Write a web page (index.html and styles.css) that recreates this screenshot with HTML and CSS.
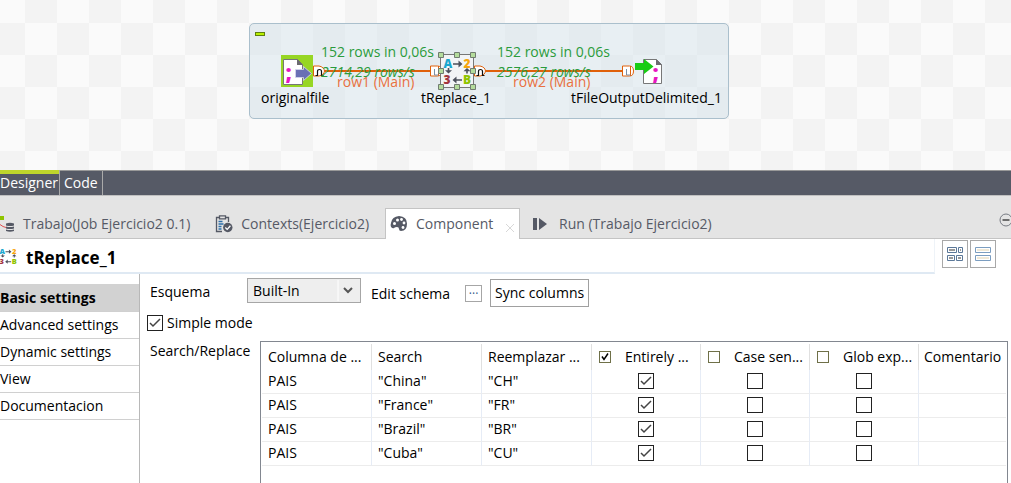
FILE: index.html
```html
<!DOCTYPE html>
<html lang="es">
<head>
<meta charset="utf-8">
<title>tReplace_1</title>
<link rel="stylesheet" href="styles.css">
</head>
<body>
<svg class="defs" aria-hidden="true">
  <symbol id="replace" viewBox="0 0 32 32">
    <g class="letters">
      <text x="2.500" y="13" fill="#1aa7cf">A</text>
      <text x="22.500" y="13" fill="#f7a60a">2</text>
      <text x="2.500" y="29" fill="#a3363f">3</text>
      <text x="22" y="29" fill="#8fc400">B</text>
    </g>
    <path d="M12 8.200h5.500V5.500L21.500 9l-4 3.500V9.800H12zM21 24.200h-5.500v-2.700l-4 3.500 4 3.500v-2.700H21zM6.700 13h1.600v2.200H11L7.500 18.500 4 15.200h2.700zM25.200 18.500h1.600v-2.200h2.700L26 13l-3.500 3.300h2.700z" fill="#4c505c"/>
  </symbol>
  <symbol id="out" viewBox="0 0 12 12">
    <path d="M.5 1H6q5 1 5.500 5-.5 4-5.500 5H.500z" fill="#fff" stroke="#e0600a"/>
    <path d="M2.500 10.500h2V6.500q0-2 2-2t2 2v4h2" fill="none" stroke="#111" stroke-width="1.200"/>
  </symbol>
  <symbol id="in" viewBox="0 0 12 12">
    <path d="M.5 1h7q4 0 4 5t-4 5h-7zM8.500 1v10" fill="#fff" stroke="#e0600a"/>
    <path d="M4.500 4v6h4" fill="none" stroke="#7a8fa5"/>
  </symbol>
</svg>

<main class="app">
  <section class="canvas" aria-label="Job">
    <div class="job">
      <span class="collapse"></span>
      <span class="link link-a"></span>
      <span class="link link-b"></span>
      <svg class="node node-source" viewBox="0 0 32 32">
        <path fill="#97d624" d="M0 0h32v32H0z"/>
        <path d="M2.500 4.500h14l5 5v20h-19z" fill="#fff" stroke="#777"/>
        <path d="M16 4v6h6z" fill="#6b6b70"/>
        <path d="M14.500 14.500h8v-3L30.500 18.500l-8 7v-3h-8z" fill="#6970b5" stroke="#d5d8ee" stroke-width=".8"/>
        <text class="semi" x="4.500" y="25">;</text>
      </svg>
      <svg class="port port-a"><use href="#out"/></svg>
      <svg class="port port-b"><use href="#in"/></svg>
      <svg class="port port-c"><use href="#out"/></svg>
      <svg class="port port-d"><use href="#in"/></svg>
      <svg class="node node-replace" viewBox="0 0 38 38">
        <path d="M2.500 2.500h33v33h-33z" fill="#f2f4f6" stroke="#777"/>
        <use href="#replace" x="3" y="3" width="32" height="32"/>
        <path d="M.5.5h5v5h-5zM16.500.5h5v5h-5zM32.500.5h5v5h-5zM.5 16.500h5v5h-5zM32.500 16.500h5v5h-5zM.5 32.500h5v5h-5zM16.500 32.500h5v5h-5zM32.500 32.500h5v5h-5z" fill="#b4dc9c" stroke="#707c70"/>
      </svg>
      <svg class="node node-output" viewBox="0 0 30 28">
        <path d="M9.500 1.500h13l5 5v19h-18z" fill="#fff" stroke="#777"/>
        <path d="M22 1v6h6z" fill="#6b6b70"/>
        <path d="M1 5h9V1l9.500 7.500L10 16v-4H1z" fill="#18cc14"/>
        <text class="semi" x="18.500" y="22">;</text>
      </svg>
      <span class="stat stat-a">152 rows in 0,06s</span>
      <i class="rate rate-a">2714,29 rows/s</i>
      <span class="row-name row-a">row1 (Main)</span>
      <span class="stat stat-b">152 rows in 0,06s</span>
      <i class="rate rate-b">2576,27 rows/s</i>
      <span class="row-name row-b">row2 (Main)</span>
      <span class="caption caption-a">originalfile</span>
      <span class="caption caption-b">tReplace_1</span>
      <span class="caption caption-c">tFileOutputDelimited_1</span>
    </div>
  </section>

  <nav class="editor-tabs">
    <button class="editor-tab is-current">Designer</button>
    <button class="editor-tab">Code</button>
  </nav>

  <nav class="view-tabs">
    <button class="view-tab tab-job">
      <svg class="tab-icon" viewBox="0 0 18 18"><path d="M0 1h7v4H0z" fill="#8fc400"/><path d="M3 9.500l3 2 3 1" fill="none" stroke="#e05050"/><path d="M9 8.500q4-1.500 8 0v2q-4 1-8 0zM9 11.500q4 1 8 0v2q-4 1-8 0zM9 14.500q4 1 8 0v1.500q-4 1.500-8 0z" fill="#555965"/></svg>
      Trabajo(Job Ejercicio2 0.1)</button>
    <button class="view-tab tab-contexts">
      <svg class="tab-icon" viewBox="0 0 18 18"><path d="M7 16.500H1.500v-14h12V7" fill="none" stroke="#555965" stroke-width="1.300"/><path d="M4.500.8h6v3h-6z" fill="#e4e4e4" stroke="#555965" stroke-width="1.300"/><path d="M3.500 6.500h4M3.500 9h5M3.500 11.500h3M3.500 14h3" stroke="#2c6ea8" stroke-width="1.300"/><circle cx="12.800" cy="12.500" r="4.700" fill="#555965"/><path d="m10.300 12.500 1.900 1.900 3.200-3.600" fill="none" stroke="#fff" stroke-width="1.300"/></svg>
      Contexts(Ejercicio2)</button>
    <button class="view-tab tab-component is-current">
      <svg class="tab-icon" viewBox="0 0 18 18"><path d="M1 8Q2 1.500 9 1q8 .5 8 7.500 0 7.500-6 7.500-2 0-2-2t-2-2q-2 0-3 1T1 12q-.8-2 0-4z" fill="#555965"/><g fill="#fff"><circle cx="4.500" cy="8.500" r="1.500"/><circle cx="7.500" cy="5" r="1.500"/><circle cx="11.500" cy="4.500" r="1.400"/><circle cx="14" cy="8" r="1.400"/><circle cx="13" cy="12.500" r="1.400"/></g></svg>
      Component
      <svg class="tab-close" viewBox="0 0 8 8"><path d="m0 0 8 8M8 0 0 8" stroke="#d8d8d8"/></svg></button>
    <button class="view-tab tab-run">
      <svg class="tab-icon" viewBox="0 0 18 18"><path d="M0 3h4v12H0zM6 3l8 6-8 6z" fill="#555965"/></svg>
      Run (Trabajo Ejercicio2)</button>
    <button class="minimize" aria-label="Minimize"><svg viewBox="0 0 14 14"><circle cx="7" cy="7" r="6" fill="none" stroke="#777b83"/><path d="M3.500 7h7" stroke="#444" stroke-width="1.500"/></svg></button>
  </nav>

  <header class="head">
    <h1 class="title"><svg class="title-icon"><use href="#replace"/></svg>tReplace_1</h1>
    <div class="layouts">
      <button class="layout" aria-label="Table layout"><svg viewBox="0 0 16 14"><path d="M.5.5h9v5h-9zM11.500.5h4v5h-4zM.5 8.500h7v5h-7zM9.500 8.500h6v5h-6z" fill="#fff" stroke="#5b7899"/><path d="M2 2h6v2H2zM13 2h1v2h-1zM2 10h4v2H2zM11 10h3v2h-3z" fill="#999"/></svg></button>
      <button class="layout" aria-label="List layout"><svg viewBox="0 0 16 14"><path d="M.5.5h15v5H.5zM.5 8.500h15v5H.5z" fill="#fff" stroke="#7b9dc0"/><path d="M2 2h12v2H2zM2 10h12v2H2z" fill="#efe8d6"/></svg></button>
    </div>
  </header>

  <div class="body">
    <nav class="side">
      <a class="side-item is-current" href="#basic">Basic settings</a>
      <a class="side-item" href="#advanced">Advanced settings</a>
      <a class="side-item" href="#dynamic">Dynamic settings</a>
      <a class="side-item" href="#view">View</a>
      <a class="side-item" href="#doc">Documentacion</a>
    </nav>
    <section class="form">
      <div class="schema">
        <label class="name" for="schema">Esquema</label>
        <select class="select" id="schema"><option>Built-In</option></select>
        <label class="edit" for="edit">Edit schema</label>
        <button class="dots" id="edit">···</button>
        <button class="sync">Sync columns</button>
      </div>
      <label class="simple"><input class="check" type="checkbox" checked>Simple mode</label>
      <div class="replace">
        <span class="name">Search/Replace</span>
        <div class="grid-box">
          <table class="grid">
            <colgroup><col class="wide"><col class="wide"><col class="wide"><col class="flag"><col class="flag"><col class="flag"><col></colgroup>
            <thead><tr>
              <th>Columna de ...</th><th>Search</th><th>Reemplazar ...</th>
              <th><label class="all"><input class="mini" type="checkbox" checked>Entirely ...</label></th>
              <th><label class="all"><input class="mini" type="checkbox">Case sen...</label></th>
              <th><label class="all"><input class="mini" type="checkbox">Glob exp...</label></th>
              <th class="last">Comentario</th>
            </tr></thead>
            <tbody>
              <tr><td>PAIS</td><td>"China"</td><td>"CH"</td><td class="tick"><input class="check" type="checkbox" aria-label="Entirely" checked></td><td class="tick"><input class="check" type="checkbox" aria-label="Case"></td><td class="tick"><input class="check" type="checkbox" aria-label="Glob"></td><td></td></tr>
              <tr><td>PAIS</td><td>"France"</td><td>"FR"</td><td class="tick"><input class="check" type="checkbox" aria-label="Entirely" checked></td><td class="tick"><input class="check" type="checkbox" aria-label="Case"></td><td class="tick"><input class="check" type="checkbox" aria-label="Glob"></td><td></td></tr>
              <tr><td>PAIS</td><td>"Brazil"</td><td>"BR"</td><td class="tick"><input class="check" type="checkbox" aria-label="Entirely" checked></td><td class="tick"><input class="check" type="checkbox" aria-label="Case"></td><td class="tick"><input class="check" type="checkbox" aria-label="Glob"></td><td></td></tr>
              <tr><td>PAIS</td><td>"Cuba"</td><td>"CU"</td><td class="tick"><input class="check" type="checkbox" aria-label="Entirely" checked></td><td class="tick"><input class="check" type="checkbox" aria-label="Case"></td><td class="tick"><input class="check" type="checkbox" aria-label="Glob"></td><td></td></tr>
            </tbody>
          </table>
        </div>
      </div>
    </section>
  </div>
</main>
</body>
</html>
```
FILE: styles.css
```css
* { box-sizing: border-box; }
body { margin: 0; background: #fff; color: #000; font: 14px/20px "Open Sans", "Noto Sans", sans-serif; }
button, select, input { margin: 0; font: inherit; color: inherit; }
button { padding: 0; background: none; border: 0; }
.defs { position: absolute; width: 0; height: 0; }
.letters { font: 800 12px "Open Sans", sans-serif; }
.semi { font: 800 21px "Open Sans", sans-serif; fill: #e815c0; }
.app { display: flex; flex-direction: column; min-height: 100vh; overflow: hidden; }

/* job canvas */
.canvas { position: relative; height: 170px; overflow: hidden; background: conic-gradient(#f3f3f3 25%, #fafafa 0 50%, #f3f3f3 0 75%, #fafafa 0) 25px 23px / 64px 64px; }
.job { position: absolute; left: 249px; top: 23px; width: 480px; height: 96px; border: 1px solid #aabfcc; border-radius: 5px; background: rgba(213, 228, 236, .5); white-space: nowrap; }
.job > * { position: absolute; }
.collapse { left: 5px; top: 8px; width: 10px; height: 4px; background: #b8f000; border: 1px solid #5f7f10; }
.link { top: 46px; height: 2px; background: #e0600a; }
.link-a { left: 73px; width: 110px; }
.link-b { left: 233px; width: 142px; }
.node-source { left: 31px; top: 31px; width: 32px; height: 32px; }
.node-replace { left: 188px; top: 28px; width: 38px; height: 38px; }
.node-output { left: 384px; top: 34px; width: 30px; height: 28px; }
.port { top: 41px; width: 12px; height: 12px; }
.port-a { left: 63px; }
.port-b { left: 180px; }
.port-c { left: 224px; }
.port-d { left: 372px; }
.stat { top: 18px; color: #2b9b3b; }
.rate { top: 38px; color: #2b9b3b; }
.row-name { top: 48px; color: #e87040; }
.stat-a { left: 71px; }
.rate-a { left: 71px; }
.row-a { left: 87px; }
.stat-b { left: 247px; }
.rate-b { left: 247px; }
.row-b { left: 263px; }
.caption { top: 64px; }
.caption-a { left: 11px; }
.caption-b { left: 171px; }
.caption-c { left: 321px; }

/* editor tabs */
.editor-tabs { display: flex; height: 26px; background: #565a66; border-top: 1px solid #999; border-bottom: 1px solid #c0c0c0; color: #fff; }
.editor-tab { padding: 0 4px; border-right: 1px solid #aaa; }
.editor-tab.is-current { margin-top: -1px; padding: 1px 1px 0 0; box-shadow: inset 0 4px #bfd62c; }

/* view tabs */
.view-tabs { display: flex; align-items: flex-end; height: 43px; padding-top: 12px; background: #e4e4e4; box-shadow: inset 0 -1px #c4c4c4; color: #565a66; }
.view-tab { display: flex; align-items: center; gap: 8px; height: 31px; flex: none; border: 1px solid transparent; border-bottom: 0; }
.view-tab.is-current { background: #fff; border-color: #c4c4c4; }
.tab-icon { width: 18px; height: 18px; flex: none; }
.tab-job { margin-left: -4px; }
.tab-contexts { margin-left: 23px; }
.tab-component { width: 135px; margin-left: 15px; padding-left: 4px; }
.tab-close { width: 8px; height: 8px; margin: 8px 0 0 5px; }
.tab-run { margin-left: 12px; }
.minimize { width: 14px; height: 14px; flex: none; margin: 0 -2px 12px auto; display: flex; }

/* component header */
.head { display: flex; height: 35px; padding-right: 15px; gap: 7px; }
.title { display: flex; align-items: center; gap: 8px; flex: 1; margin: 0; padding-top: 4px; border-bottom: 2px solid #dfe9f3; border-right: 1px solid #eef3f8; font-size: 17px; font-weight: 700; }
.title-icon { width: 20px; height: 20px; margin: -4px 0 0 -2px; }
.layouts { display: flex; gap: 2px; }
.layout { display: grid; place-items: center; width: 26px; height: 28px; margin-top: 1px; border: 1px solid #a8a8a8; background: #fff; }
.layout svg { width: 16px; height: 14px; }

/* settings */
.body { display: flex; flex: 1; }
.side { width: 140px; flex: none; padding-top: 10px; border-right: 1px solid #b8b8b8; }
.side-item { display: block; height: 27px; padding-top: 3px; border-bottom: 1px solid #d0d0d0; color: #000; text-decoration: none; }
.side-item.is-current { height: 28px; padding-top: 4px; background: #d2d2d2; font-weight: 700; }
.form { display: flex; flex-direction: column; flex: 1; min-width: 0; padding: 4px 3px 0 7px; }
.name { width: 100px; flex: none; padding-left: 3px; }
.schema { display: flex; align-items: flex-start; height: 36px; }
.schema .name { padding-top: 4px; }
.select { appearance: none; width: 114px; height: 25px; padding: 0 5px; border: 1px solid #a6a6a6; border-radius: 0; background: url("data:image/svg+xml,%3Csvg xmlns='http://www.w3.org/2000/svg' width='24' height='23'%3E%3Cpath d='M2 1v21' stroke='%23fff'/%3E%3Cpath d='m8 9 4 4 4-4' fill='none' stroke='%23555' stroke-width='2'/%3E%3C/svg%3E") right center no-repeat #eee; }
.edit { padding: 6px 0 0 10px; }
.dots { width: 17px; height: 17px; margin: 7px 8px 0 15px; border: 1px solid #a6a6a6; color: #345a8a; font-size: 12px; line-height: 12px; }
.sync { height: 28px; padding: 0 4px; margin-top: 1px; border: 1px solid #a0a0a0; background: #fff; }
.simple { display: flex; align-items: center; gap: 4px; height: 17px; }
.check { appearance: none; display: block; width: 16px; height: 16px; border: 1px solid #222; background: #fff; }
.check:checked { background: url("data:image/svg+xml,%3Csvg xmlns='http://www.w3.org/2000/svg' width='14' height='14'%3E%3Cpath d='m2 7 3 3 7-7' fill='none' stroke='%23444' stroke-width='1.500'/%3E%3C/svg%3E") center no-repeat #fff; }
.replace { display: flex; flex: 1; padding-top: 10px; }
.replace .name { width: 113px; }
.grid-box { flex: 1; min-width: 0; padding: 2px 1px 0; border: 1px solid #828790; border-bottom: 0; }
.grid { width: 100%; table-layout: fixed; border-collapse: separate; border-spacing: 0; }
.wide { width: 110px; }
.flag { width: 109px; }
.grid th { height: 26px; padding: 0 0 0 6px; border-right: 1px solid #e0e0e0; font-weight: 400; text-align: left; white-space: nowrap; }
.grid td { height: 24px; padding: 0 0 2px 6px; border-right: 1px solid #e6ecf6; border-bottom: 1px solid #ececec; }
.grid th:last-child, .grid td:last-child { border-right: 0; }
.grid th.last { padding-left: 5px; }
.grid td.tick { padding: 0 0 2px; }
.tick .check { margin: 0 auto; }
.all { display: flex; align-items: center; gap: 14px; }
.mini { appearance: none; width: 12px; height: 12px; flex: none; margin-left: 1px; border: 1px solid #6f7048; background: #fff; }
.mini:checked { background: url("data:image/svg+xml,%3Csvg xmlns='http://www.w3.org/2000/svg' width='10' height='10'%3E%3Cpath d='m2 4.500 2 3 4-6' fill='none' stroke='%23000' stroke-width='1.500'/%3E%3C/svg%3E") center no-repeat #fff; }
```
